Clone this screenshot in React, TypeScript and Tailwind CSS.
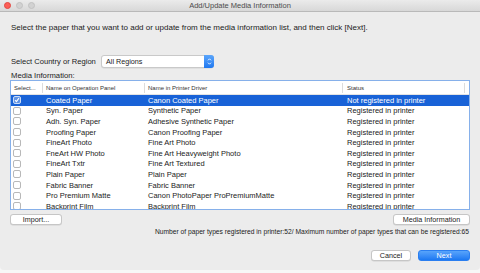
import React from "react";

const rows: [string, string, string][] = [
  ["Coated Paper", "Canon Coated Paper", "Not registered in printer"],
  ["Syn. Paper", "Synthetic Paper", "Registered in printer"],
  ["Adh. Syn. Paper", "Adhesive Synthetic Paper", "Registered in printer"],
  ["Proofing Paper", "Canon Proofing Paper", "Registered in printer"],
  ["FineArt Photo", "Fine Art Photo", "Registered in printer"],
  ["FneArt HW Photo", "Fine Art Heavyweight Photo", "Registered in printer"],
  ["FineArt Txtr", "Fine Art Textured", "Registered in printer"],
  ["Plain Paper", "Plain Paper", "Registered in printer"],
  ["Fabric Banner", "Fabric Banner", "Registered in printer"],
  ["Pro Premium Matte", "Canon PhotoPaper ProPremiumMatte", "Registered in printer"],
  ["Backprint Film", "Backprint Film", "Registered in printer"],
];

function Check({ on }: { on: boolean }) {
  if (on) {
    return (
      <div className="w-[8px] h-[8px] rounded-[2px] bg-[#5f93e6] border border-[#c9dbf7] flex items-center justify-center">
        <svg width="6" height="6" viewBox="0 0 6 6">
          <path d="M1 3.2 L2.4 4.6 L5 1.2" stroke="#fff" strokeWidth="1.1" fill="none" />
        </svg>
      </div>
    );
  }
  return <div className="w-[8px] h-[8px] rounded-[2px] bg-white border border-[#b8b8b8]" />;
}

export default function App() {
  return (
    <div
      className="w-[480px] h-[273px] bg-[#f7f7f7] overflow-hidden text-[#1b1b1b]"
      style={{ fontFamily: '"Liberation Sans", Arial, sans-serif' }}
    >
      <div className="w-[480px] h-[270px] bg-[#ececec] rounded-b-[4px] flex flex-col">
        {/* Title bar */}
        <div className="h-[12px] grid grid-cols-[1fr_auto_1fr] items-center bg-gradient-to-b from-[#ebebeb] to-[#d8d8d8] border-b border-[#b9b9b9]">
          <div className="flex items-center gap-[5px] pl-[4px]">
            <div className="w-[7px] h-[7px] rounded-full bg-[#fc5f57] border border-[#e24842]" />
            <div className="w-[7px] h-[7px] rounded-full bg-[#d2d2d2] border border-[#c2c2c2]" />
            <div className="w-[7px] h-[7px] rounded-full bg-[#d2d2d2] border border-[#c2c2c2]" />
          </div>
          <div className="text-[7.5px] leading-[11px] text-[#4c4c4c]">Add/Update Media Information</div>
          <div />
        </div>

        <div className="flex flex-col px-[10px]">
          <div className="mt-[11px] pl-[1px] text-[8px] leading-[9px] whitespace-nowrap">
            Select the paper that you want to add or update from the media information list, and then click [Next].
          </div>

          <div className="mt-[22px] flex items-center h-[14px]">
            <div className="pl-[1px] w-[91px] text-[7.6px] leading-[9px] whitespace-nowrap">Select Country or Region</div>
            <div className="w-[113px] h-[13px] bg-white border border-[#c9c9c9] rounded-[3px] flex items-center justify-between shadow-[0_0.5px_0.5px_rgba(0,0,0,0.1)]">
              <span className="pl-[4px] text-[7.2px] leading-[9px]">All Regions</span>
              <div className="w-[10px] h-[13px] -mr-[1px] rounded-r-[3px] bg-gradient-to-b from-[#5aa5fb] to-[#1e78f0] flex items-center justify-center">
                <svg width="5" height="9" viewBox="0 0 5 9">
                  <path d="M1 3.3 L2.5 1.8 L4 3.3" stroke="#fff" strokeWidth="0.9" fill="none" />
                  <path d="M1 5.7 L2.5 7.2 L4 5.7" stroke="#fff" strokeWidth="0.9" fill="none" />
                </svg>
              </div>
            </div>
          </div>

          <div className="mt-[3px] pl-[1px] text-[7.7px] leading-[9px]">Media Information:</div>

          {/* Table */}
          <div className="h-[130px] bg-white border-[1.5px] border-[#86b0ea] overflow-hidden flex flex-col">
            <div className="h-[14px] flex items-center text-[6px] leading-[8px] text-[#333] border-b border-[#e4e4e4] shrink-0">
              <div className="w-[32px] pl-[3px] border-r border-[#dcdcdc] h-[10px] flex items-center">Select...</div>
              <div className="w-[102px] pl-[3px] border-r border-[#dcdcdc] h-[10px] flex items-center">Name on Operation Panel</div>
              <div className="w-[198px] pl-[3px] border-r border-[#dcdcdc] h-[10px] flex items-center">Name in Printer Driver</div>
              <div className="w-[122px] pl-[4px] border-r border-[#dcdcdc] h-[10px] flex items-center">Status</div>
              <div className="flex-1" />
            </div>
            {rows.map((r, i) => {
              const sel = i === 0;
              return (
                <div
                  key={i}
                  className={`h-[10.6px] shrink-0 flex items-center text-[7.5px] leading-[9px] ${sel ? "bg-[#1862d7] text-white" : ""}`}
                >
                  <div className="w-[32px] pl-[2px] flex items-center">
                    <Check on={sel} />
                  </div>
                  <div className="w-[102px] pl-[3px] whitespace-nowrap">{r[0]}</div>
                  <div className="w-[198px] pl-[3px] whitespace-nowrap">{r[1]}</div>
                  <div className="w-[122px] pl-[4px] whitespace-nowrap">{r[2]}</div>
                </div>
              );
            })}
          </div>

          <div className="mt-[4px] flex justify-between">
            <button className="w-[52px] h-[11px] bg-white border border-[#c6c6c6] rounded-[3px] text-[7.2px] leading-[9px] shadow-[0_0.5px_0.5px_rgba(0,0,0,0.12)]">
              Import...
            </button>
            <button className="w-[77px] h-[11px] bg-white border border-[#c6c6c6] rounded-[3px] text-[7.2px] leading-[9px] shadow-[0_0.5px_0.5px_rgba(0,0,0,0.12)]">
              Media Information
            </button>
          </div>

          <div className="mt-[3px] text-right text-[6.7px] leading-[8px] pr-[1px] whitespace-nowrap">
            Number of paper types registered in printer:52/ Maximum number of paper types that can be registered:65
          </div>

          <div className="mt-[14px] flex justify-end gap-[7px]">
            <button className="w-[40px] h-[11px] bg-white border border-[#c6c6c6] rounded-[3px] text-[7.2px] leading-[9px] shadow-[0_0.5px_0.5px_rgba(0,0,0,0.12)]">
              Cancel
            </button>
            <button className="w-[52px] h-[11px] bg-gradient-to-b from-[#58a4fb] to-[#1b78f2] border border-[#2a7ef0] rounded-[3px] text-[7.2px] leading-[9px] text-white">
              Next
            </button>
          </div>
        </div>
      </div>
    </div>
  );
}
